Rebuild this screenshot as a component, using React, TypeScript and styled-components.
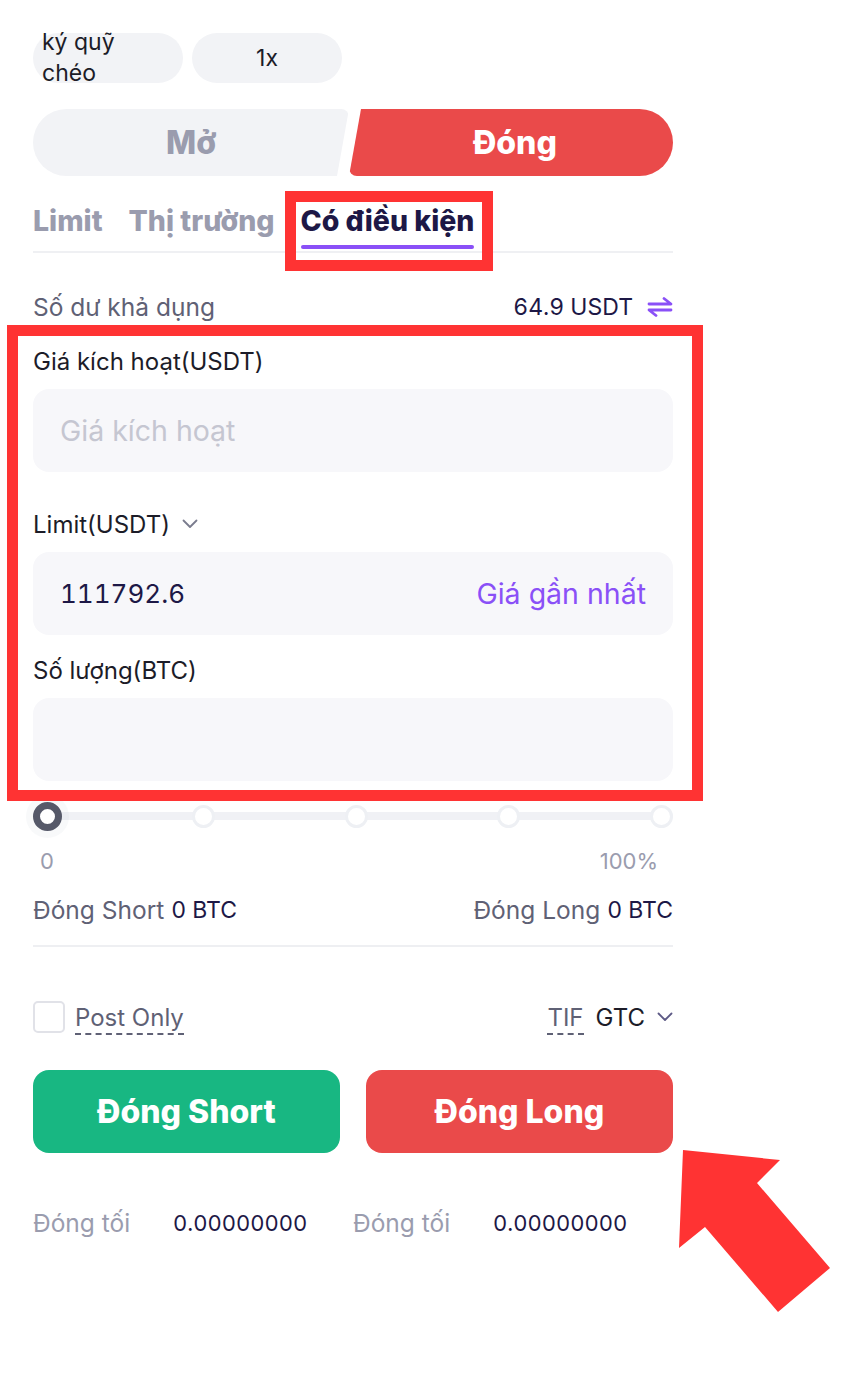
import React from "react";
import styled, { createGlobalStyle } from "styled-components";

const Global = createGlobalStyle`
  html, body { margin: 0; padding: 0; background: #ffffff; }
  body { font-family: Inter, "Noto Sans", Arial, sans-serif; color: #1c1c28; }
  * { box-sizing: border-box; }
`;

const Page = styled.div`
  position: relative;
  width: 844px;
  height: 1376px;
  padding: 33px 171px 0 33px;
  display: flex;
  flex-direction: column;
  overflow: hidden;
`;

const TopRow = styled.div`
  display: flex;
  gap: 9px;
  height: 50px;
`;

const Pill = styled.div<{ $center?: boolean }>`
  width: 150px;
  height: 50px;
  border-radius: 25px;
  background: #f2f3f6;
  display: flex;
  align-items: center;
  justify-content: ${(p) => (p.$center ? "center" : "flex-start")};
  padding-left: ${(p) => (p.$center ? "0" : "9px")};
  font-size: 23px;
  line-height: 31px;
  color: #1c1c28;
  overflow: visible;
`;

const PillText = styled.span`
  max-width: 100px;
`;

const Toggle = styled.div`
  display: flex;
  margin-top: 26px;
  height: 67px;
`;

const ToggleBtn = styled.div<{ $active?: boolean; $side: "left" | "right" }>`
  flex: 1;
  height: 67px;
  display: flex;
  align-items: center;
  justify-content: center;
  font-weight: 800;
  font-size: 32px;
  color: ${(p) => (p.$active ? "#ffffff" : "#9a9cae")};
  background: ${(p) => (p.$active ? "#ea4a4a" : "#f2f3f6")};
  border-radius: ${(p) => (p.$side === "left" ? "34px 8px 8px 34px" : "8px 34px 34px 8px")};
  clip-path: ${(p) =>
    p.$side === "left"
      ? "polygon(0 0, 100% 0, calc(100% - 12px) 100%, 0 100%)"
      : "polygon(12px 0, 100% 0, 100% 100%, 0 100%)"};
  padding-left: ${(p) => (p.$side === "right" ? "8px" : "0")};
`;

const Tabs = styled.div`
  display: flex;
  gap: 26px;
  margin-top: 27px;
  border-bottom: 2px solid #eff0f3;
  position: relative;
`;

const Tab = styled.div<{ $active?: boolean }>`
  font-weight: 800;
  font-size: 28.5px;
  line-height: 36px;
  color: ${(p) => (p.$active ? "#1d1846" : "#9a9cae")};
  padding-bottom: 12px;
  position: relative;
  &::after {
    content: "";
    display: ${(p) => (p.$active ? "block" : "none")};
    position: absolute;
    left: 0;
    right: 0;
    bottom: 2px;
    height: 4px;
    border-radius: 2px;
    background: #8a50f7;
  }
`;

const Row = styled.div<{ $mt?: number; $h?: number }>`
  display: flex;
  align-items: center;
  justify-content: space-between;
  margin-top: ${(p) => p.$mt ?? 0}px;
  height: ${(p) => p.$h ?? 30}px;
`;

const Muted = styled.span<{ $tone?: "mid" | "light" }>`
  font-size: 24.5px;
  color: ${(p) => (p.$tone === "light" ? "#9a9cae" : "#5f6175")};
`;

const Strong = styled.span<{ $size?: number }>`
  font-size: ${(p) => p.$size ?? 23}px;
  color: #1d1846;
  font-feature-settings: "tnum";
`;

const Inline = styled.div<{ $gap?: number }>`
  display: flex;
  align-items: center;
  gap: ${(p) => p.$gap ?? 8}px;
`;

const Label = styled.div<{ $mt: number }>`
  margin-top: ${(p) => p.$mt}px;
  height: 30px;
  display: flex;
  align-items: center;
  gap: 12px;
  font-size: 24px;
  color: #1c1c28;
`;

const Field = styled.div`
  margin-top: 13px;
  height: 83px;
  border-radius: 16px;
  background: #f7f7fa;
  display: flex;
  align-items: center;
  justify-content: space-between;
  padding: 0 27px;
  font-size: 28.5px;
`;

const Placeholder = styled.span`
  color: #c5c6d1;
`;

const Value = styled.span`
  color: #1d1846;
  font-feature-settings: "tnum";
  font-size: 26px;
`;

const Accent = styled.span`
  color: #8a50f7;
`;

const Slider = styled.div`
  margin-top: 20px;
  height: 30px;
  display: flex;
  align-items: center;
  justify-content: space-between;
  position: relative;
  &::before {
    content: "";
    position: absolute;
    left: 14px;
    right: 0;
    top: 11px;
    height: 8px;
    background: #f0f1f5;
    border-radius: 4px;
  }
`;

const Thumb = styled.div`
  position: relative;
  width: 29px;
  height: 29px;
  border-radius: 50%;
  border: 7px solid #565969;
  background: #ffffff;
  box-shadow: 0 0 0 7px rgba(200, 202, 215, 0.12);
`;

const Dot = styled.div`
  position: relative;
  width: 23px;
  height: 23px;
  border-radius: 50%;
  border: 3px solid #eef0f4;
  background: #ffffff;
`;

const ScaleRow = styled.div`
  margin-top: 15px;
  height: 30px;
  display: flex;
  align-items: center;
  justify-content: space-between;
  padding: 0 15px 0 7px;
  font-size: 22px;
  color: #9a9cae;
`;

const Divider = styled.div`
  margin-top: 20px;
  height: 2px;
  background: #eeeff2;
`;

const Check = styled.div`
  width: 32px;
  height: 32px;
  border: 2px solid #e1e2e8;
  border-radius: 5px;
`;

const Dashed = styled.span`
  font-size: 24px;
  color: #5f6175;
  border-bottom: 2px dashed #5f6175;
  line-height: 28px;
  padding-bottom: 1px;
  margin-top: 4px;
`;

const Dark = styled.span`
  font-size: 24px;
  color: #1c1c28;
`;

const Actions = styled.div`
  margin-top: 36px;
  display: grid;
  grid-template-columns: 307px 307px;
  justify-content: space-between;
`;

const ActionBtn = styled.div<{ $color: string }>`
  height: 83px;
  border-radius: 16px;
  background: ${(p) => p.$color};
  color: #ffffff;
  display: flex;
  align-items: center;
  justify-content: center;
  font-weight: 800;
  font-size: 32px;
`;

const Bottom = styled.div`
  margin-top: 55px;
  height: 30px;
  display: grid;
  grid-template-columns: 140px 180px 140px 180px;
  align-items: center;
`;

const Annot = styled.div<{ $l: number; $t: number; $w: number; $h: number }>`
  position: absolute;
  left: ${(p) => p.$l}px;
  top: ${(p) => p.$t}px;
  width: ${(p) => p.$w}px;
  height: ${(p) => p.$h}px;
  border: 11px solid #ff3333;
  pointer-events: none;
`;

const ArrowSvg = styled.svg`
  position: absolute;
  left: 670px;
  top: 1140px;
`;

const Chevron = ({ color = "#7a7c8e" }: { color?: string }) => (
  <svg width="16" height="10" viewBox="0 0 16 10">
    <polyline points="1.5,1.5 8,8 14.5,1.5" fill="none" stroke={color} strokeWidth="1.8" strokeLinecap="round" strokeLinejoin="round" />
  </svg>
);

const SwapIcon = () => (
  <svg width="26" height="20" viewBox="0 0 26 20">
    <path d="M2 7 H24 L17 1.5" fill="none" stroke="#8a50f7" strokeWidth="2.8" strokeLinecap="round" strokeLinejoin="round" />
    <path d="M24 13 H2 L9 18.5" fill="none" stroke="#8a50f7" strokeWidth="2.8" strokeLinecap="round" strokeLinejoin="round" />
  </svg>
);

export default function App() {
  return (
    <>
      <Global />
      <Page>
        <TopRow>
          <Pill>
            <PillText>ký quỹ chéo</PillText>
          </Pill>
          <Pill $center>1x</Pill>
        </TopRow>

        <Toggle>
          <ToggleBtn $side="left">Mở</ToggleBtn>
          <ToggleBtn $side="right" $active>
            Đóng
          </ToggleBtn>
        </Toggle>

        <Tabs>
          <Tab>Limit</Tab>
          <Tab>Thị trường</Tab>
          <Tab $active>Có điều kiện</Tab>
        </Tabs>

        <Row $mt={39}>
          <Muted>Số dư khả dụng</Muted>
          <Inline $gap={14}>
            <Strong>64.9 USDT</Strong>
            <SwapIcon />
          </Inline>
        </Row>

        <Label $mt={24}>Giá kích hoạt(USDT)</Label>
        <Field>
          <Placeholder>Giá kích hoạt</Placeholder>
        </Field>

        <Label $mt={37}>
          Limit(USDT) <Chevron />
        </Label>
        <Field>
          <Value>111792.6</Value>
          <Accent>Giá gần nhất</Accent>
        </Field>

        <Label $mt={20}>Số lượng(BTC)</Label>
        <Field />

        <Slider>
          <Thumb />
          <Dot />
          <Dot />
          <Dot />
          <Dot />
        </Slider>

        <ScaleRow>
          <span>0</span>
          <span>100%</span>
        </ScaleRow>

        <Row $mt={19}>
          <Inline $gap={7}>
            <Muted>Đóng Short</Muted>
            <Strong>0 BTC</Strong>
          </Inline>
          <Inline $gap={7}>
            <Muted>Đóng Long</Muted>
            <Strong>0 BTC</Strong>
          </Inline>
        </Row>

        <Divider />

        <Row $mt={53} $h={34}>
          <Inline $gap={10}>
            <Check />
            <Dashed>Post Only</Dashed>
          </Inline>
          <Inline $gap={12}>
            <Dashed>TIF</Dashed>
            <Dark>GTC</Dark>
            <Chevron color="#5d5a86" />
          </Inline>
        </Row>

        <Actions>
          <ActionBtn $color="#18b782">Đóng Short</ActionBtn>
          <ActionBtn $color="#ea4a4a">Đóng Long</ActionBtn>
        </Actions>

        <Bottom>
          <Muted $tone="light">Đóng tối</Muted>
          <Strong $size={22}>0.00000000</Strong>
          <Muted $tone="light">Đóng tối</Muted>
          <Strong $size={22}>0.00000000</Strong>
        </Bottom>

        <Annot $l={285} $t={191} $w={208} $h={80} />
        <Annot $l={7} $t={325} $w={696} $h={476} />
        <ArrowSvg width="170" height="180" viewBox="0 0 170 180">
          <polygon points="13,10 110,20 87,43 160,128 108,172 35,87 9,108" fill="#ff3333" />
        </ArrowSvg>
      </Page>
    </>
  );
}
